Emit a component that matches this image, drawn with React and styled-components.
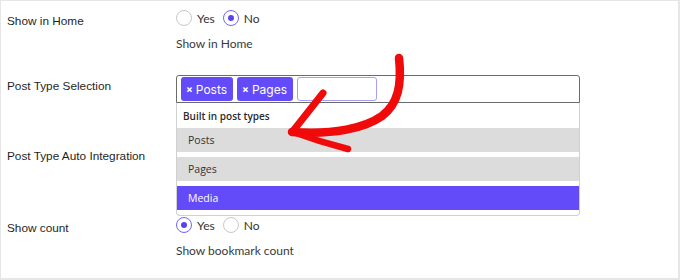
import styled, { createGlobalStyle } from 'styled-components';

const GlobalStyle = createGlobalStyle`
  body {
    margin: 0;
    background: #ffffff;
    font-family: "Liberation Sans", Arial, sans-serif;
  }
`;

const Frame = styled.div`
  position: relative;
  width: 680px;
  height: 280px;
  box-sizing: border-box;
  border-style: solid;
  border-color: #e6e6e6;
  border-width: 1px 2px 2px 1px;
  display: grid;
  grid-template-rows: 65px 70px 72px 1fr;
  overflow: hidden;
`;

const Row = styled.div`
  display: grid;
  grid-template-columns: 175px 1fr;
  padding-top: 9px;
  align-items: start;
`;

const Label = styled.div`
  padding: 3px 0 0 6px;
  font-size: 11.8px;
  line-height: 17px;
  color: #1f1f1f;
`;

const Control = styled.div`
  display: flex;
  flex-direction: column;
  align-items: flex-start;
`;

const RadioGroup = styled.div`
  display: flex;
  align-items: center;
  height: 16px;
  gap: 8px;
`;

const RadioOption = styled.label`
  display: flex;
  align-items: center;
  gap: 5px;
  font-family: Lato, "Liberation Sans", sans-serif;
  font-size: 12px;
  color: #333333;
`;

const RadioCircle = styled.span`
  width: 16px;
  height: 16px;
  box-sizing: border-box;
  border-radius: 50%;
  border: 1px solid ${p => (p.$checked ? '#7465f2' : '#c9c9c9')};
  display: flex;
  align-items: center;
  justify-content: center;

  &::after {
    content: '';
    width: 6px;
    height: 6px;
    border-radius: 50%;
    background: ${p => (p.$checked ? '#5a43f0' : 'transparent')};
  }
`;

const Description = styled.div`
  margin-top: 10px;
  font-family: Lato, "Liberation Sans", sans-serif;
  font-size: 12px;
  line-height: 16px;
  color: #3a3a3a;
`;

const SelectWrap = styled.div`
  position: relative;
  width: 404px;
`;

const TagBox = styled.div`
  box-sizing: border-box;
  height: 28px;
  border: 1px solid #6b6b6b;
  border-radius: 3px 3px 0 0;
  padding: 0 4px;
  display: flex;
  align-items: center;
  gap: 4px;
`;

const Tag = styled.span`
  height: 24px;
  box-sizing: border-box;
  padding: 0 6px 0 5px;
  border-radius: 3px;
  background: #634bfa;
  color: #ffffff;
  font-family: Inter, "Liberation Sans", sans-serif;
  font-size: 12px;
  display: flex;
  align-items: center;
  gap: 3px;
`;

const TagX = styled.span`
  font-size: 10px;
  font-weight: 700;
`;

const SearchInput = styled.input`
  width: 80px;
  height: 24px;
  box-sizing: border-box;
  border: 1px solid #a79ff6;
  border-radius: 3px;
  outline: none;
  padding: 0 4px;
`;

const Dropdown = styled.div`
  position: absolute;
  top: 100%;
  left: 0;
  right: 0;
  box-sizing: border-box;
  background: #ffffff;
  border: 1px solid #d0d0d0;
  border-top: none;
  border-radius: 0 0 4px 4px;
  padding-bottom: 5px;
  z-index: 2;
`;

const GroupTitle = styled.div`
  height: 25px;
  padding-left: 6px;
  display: flex;
  align-items: center;
  font-family: "Open Sans", sans-serif;
  font-weight: 600;
  font-size: 10px;
  color: #2a2a2a;
`;

const OptionList = styled.div`
  display: flex;
  flex-direction: column;
  gap: 5px;
`;

const Option = styled.div`
  height: 24px;
  padding-left: 11px;
  display: flex;
  align-items: center;
  font-family: "Open Sans", sans-serif;
  font-size: 10.5px;
  background: ${p => (p.$active ? '#634bfa' : '#dcdcdc')};
  color: ${p => (p.$active ? '#ffffff' : '#333333')};
`;

const ArrowLayer = styled.svg`
  position: absolute;
  top: -1px;
  left: -1px;
  width: 680px;
  height: 280px;
  pointer-events: none;
  z-index: 3;
`;

const Radios = ({ value }) => (
  <RadioGroup>
    <RadioOption>
      <RadioCircle $checked={value === 'yes'} />
      Yes
    </RadioOption>
    <RadioOption>
      <RadioCircle $checked={value === 'no'} />
      No
    </RadioOption>
  </RadioGroup>
);

const App = () => (
  <>
    <GlobalStyle />
    <Frame>
      <Row>
        <Label>Show in Home</Label>
        <Control>
          <Radios value="no" />
          <Description>Show in Home</Description>
        </Control>
      </Row>
      <Row>
        <Label>Post Type Selection</Label>
        <Control>
          <SelectWrap>
            <TagBox>
              <Tag>
                <TagX>×</TagX>Posts
              </Tag>
              <Tag>
                <TagX>×</TagX>Pages
              </Tag>
              <SearchInput />
            </TagBox>
            <Dropdown>
              <GroupTitle>Built in post types</GroupTitle>
              <OptionList>
                <Option>Posts</Option>
                <Option>Pages</Option>
                <Option $active>Media</Option>
              </OptionList>
            </Dropdown>
          </SelectWrap>
        </Control>
      </Row>
      <Row>
        <Label>Post Type Auto Integration</Label>
        <Control />
      </Row>
      <Row>
        <Label>Show count</Label>
        <Control>
          <Radios value="yes" />
          <Description>Show bookmark count</Description>
        </Control>
      </Row>
      <ArrowLayer viewBox="0 0 680 280">
        <g fill="none" stroke="#f00a0a" strokeLinecap="round" strokeLinejoin="round">
          <path d="M399 58 C402 85 398 104 382 116 C365 128 334 135 292 132" strokeWidth="8.5" />
          <path d="M323 93 L293 131" strokeWidth="7" />
          <path d="M293 132 Q320 142 348 149" strokeWidth="6.5" />
        </g>
      </ArrowLayer>
    </Frame>
  </>
);

export default App;
